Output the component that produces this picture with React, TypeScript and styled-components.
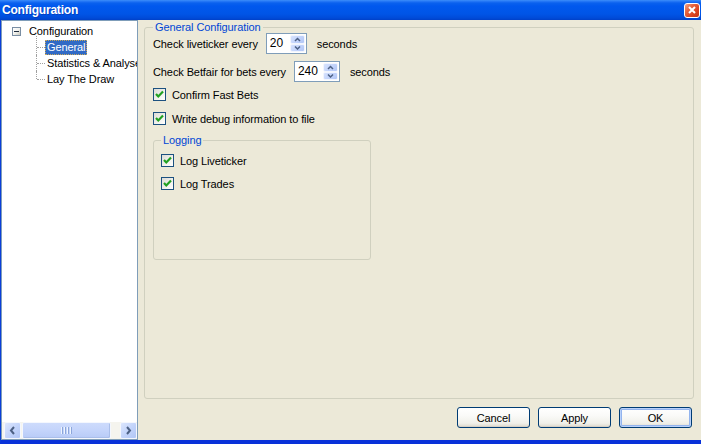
import React from 'react';
import styled, { createGlobalStyle } from 'styled-components';

const Global = createGlobalStyle`
  html, body { margin: 0; padding: 0; background: #ECE9D8; }
  body { font-family: "Liberation Sans", Arial, sans-serif; font-size: 11px; color: #000; letter-spacing: -0.1px; }
  * { box-sizing: border-box; }
`;

const Window = styled.div`
  width: 701px;
  height: 444px;
  display: flex;
  flex-direction: column;
  overflow: hidden;
  background: #ECE9D8;
`;

const TitleBar = styled.div`
  height: 20px;
  flex: none;
  display: flex;
  align-items: center;
  justify-content: space-between;
  padding: 0 1px 0 2px;
  background: linear-gradient(to bottom, #3D8FF9 0px, #2A7CF7 1px, #0A61EE 3px, #0058EE 6px, #0055E6 14px, #004BD8 18px, #0040C8 20px);
`;

const TitleText = styled.span`
  color: #fff;
  font-weight: bold;
  font-size: 12px;
  font-family: "Liberation Sans", Arial, sans-serif;
  letter-spacing: -0.2px;
  text-shadow: 1px 1px 0 rgba(10, 24, 131, 0.35);
`;

const CloseButton = styled.div`
  width: 16px;
  height: 15px;
  border: 1px solid #fff;
  border-radius: 3px;
  background: linear-gradient(135deg, #F2A287 0%, #E5643F 35%, #D9421E 70%, #C23414 100%);
  display: flex;
  align-items: center;
  justify-content: center;
`;

const Body = styled.div`
  flex: 1;
  min-height: 0;
  display: flex;
  border-left: 1px solid #0A3FD9;
  border-bottom: 4px solid #0831D9;
`;

const TreePanel = styled.div`
  width: 137px;
  flex: none;
  border: 1px solid #7F9DB9;
  background: #fff;
  display: flex;
  flex-direction: column;
`;

const TreeBody = styled.div`
  flex: 1;
  padding-top: 2px;
  overflow: hidden;
  white-space: nowrap;
`;

const RootRow = styled.div`
  height: 16px;
  display: flex;
  align-items: center;
  padding-left: 10px;
`;

const ExpandBox = styled.span`
  width: 9px;
  height: 9px;
  border: 1px solid #7A8EA3;
  background: linear-gradient(135deg, #ffffff 0%, #F2F2EE 50%, #C9C9BE 100%);
  display: flex;
  align-items: center;
  justify-content: center;
  flex: none;
  &::before {
    content: '';
    width: 5px;
    height: 1px;
    background: #1E2B3C;
  }
`;

const NodeLabel = styled.span<{ $selected?: boolean }>`
  display: inline-block;
  height: 15px;
  line-height: 15px;
  padding: 0 2px;
  background: ${p => (p.$selected ? '#316AC5' : 'transparent')};
  color: ${p => (p.$selected ? '#fff' : '#000')};
  outline: ${p => (p.$selected ? '1px dotted #C9A85A' : 'none')};
  outline-offset: -1px;
`;

const RootLabel = styled(NodeLabel)`
  margin-left: 6px;
`;

const ChildRow = styled.div<{ $first?: boolean; $last?: boolean }>`
  position: relative;
  height: 16px;
  display: flex;
  align-items: center;
  padding-left: 43px;
  &::before {
    content: '';
    position: absolute;
    left: 34px;
    top: ${p => (p.$first ? '-3px' : '0')};
    height: ${p => (p.$last ? '8px' : p.$first ? '19px' : '16px')};
    border-left: 1px dotted #A0A0A0;
  }
  &::after {
    content: '';
    position: absolute;
    left: 35px;
    top: 8px;
    width: 8px;
    border-top: 1px dotted #A0A0A0;
  }
`;

const HScroll = styled.div`
  height: 17px;
  flex: none;
  display: flex;
  padding-left: 2px;
  background: #F5F4EE;
`;

const ScrollBtn = styled.div`
  width: 17px;
  height: 17px;
  flex: none;
  border: 1px solid #F4F7FE;
  border-radius: 2px;
  background: linear-gradient(135deg, #DCE6FD 0%, #C3D4FB 50%, #B1C6F5 100%);
  display: flex;
  align-items: center;
  justify-content: center;
`;

const Thumb = styled.div`
  width: 89px;
  height: 17px;
  flex: none;
  margin-left: 1px;
  border: 1px solid #F4F7FE;
  border-radius: 2px;
  background: linear-gradient(to bottom, #CDDBFC 0%, #C4D4FB 50%, #B8CBF7 100%);
  box-shadow: inset -1px -1px 0 #A9BEEA;
  display: flex;
  align-items: center;
  justify-content: center;
  gap: 1px;
`;

const Grip = styled.span`
  width: 1px;
  height: 7px;
  background: #EEF4FE;
  box-shadow: 1px 0 0 #8CA6DB;
  margin-right: 1px;
`;

const Track = styled.div`
  flex: 1;
`;

const RightPane = styled.div`
  flex: 1;
  min-width: 0;
  display: flex;
  flex-direction: column;
  padding: 0 7px 12px 6px;
`;

const Group = styled.fieldset<{ $grow?: boolean; $width?: number }>`
  margin: ${p => (p.$grow ? '1px 0 0 0' : '9px 0 0 0')};
  border: 1px solid #D0D0BF;
  border-radius: 3px;
  min-width: 0;
  flex: ${p => (p.$grow ? '1' : 'none')};
  width: ${p => (p.$width ? `${p.$width}px` : 'auto')};
  padding: ${p => (p.$grow ? '0 8px 0 8px' : '8px 7px 69px 7px')};
  display: flex;
  flex-direction: column;
  align-items: flex-start;
`;

const Legend = styled.legend`
  color: #0046D5;
  padding: 0 2px;
  line-height: 12px;
  font-size: 11px;
`;

const SpinRow = styled.div<{ $gap: number }>`
  height: 21px;
  display: flex;
  align-items: center;
  margin-top: ${p => p.$gap}px;
  white-space: nowrap;
`;

const Spinner = styled.div<{ $w: number }>`
  width: ${p => p.$w}px;
  height: 21px;
  margin: 0 10px 0 8px;
  border: 1px solid #7F9DB9;
  background: #fff;
  display: flex;
  padding: 1px;
`;

const SpinValue = styled.span`
  flex: 1;
  padding-left: 2px;
  font-size: 12px;
  line-height: 17px;
  letter-spacing: 0;
`;

const SpinButtons = styled.div`
  width: 15px;
  display: flex;
  flex-direction: column;
`;

const SpinHalf = styled.div`
  flex: 1;
  border: 1px solid #F1F5FE;
  border-radius: 2px;
  background: linear-gradient(135deg, #D6E2FD 0%, #C2D3FB 55%, #B0C5F5 100%);
  display: flex;
  align-items: center;
  justify-content: center;
`;

const CheckRow = styled.label<{ $gap: number }>`
  height: 13px;
  display: flex;
  align-items: center;
  gap: 6px;
  margin-top: ${p => p.$gap}px;
  white-space: nowrap;
`;

const CheckBox = styled.span`
  width: 13px;
  height: 13px;
  flex: none;
  border: 1px solid #1C5180;
  background: linear-gradient(135deg, #DCDCD7 0%, #F0F0EC 55%, #FFFFFF 100%);
  display: flex;
  align-items: center;
  justify-content: center;
`;

const ButtonRow = styled.div`
  display: flex;
  justify-content: flex-end;
  gap: 8px;
  margin-top: 8px;
  padding-right: 2px;
`;

const Button = styled.button<{ $default?: boolean }>`
  width: 73px;
  height: 21px;
  border: 1px solid #003C74;
  border-radius: 3px;
  background: linear-gradient(to bottom, #FFFFFF 0%, #FAFAF8 40%, #F0F0EA 80%, #DCD7CB 100%);
  font-family: "Liberation Sans", Arial, sans-serif;
  font-size: 11px;
  letter-spacing: -0.1px;
  color: #000;
  padding: 0;
  box-shadow: ${p =>
    p.$default
      ? 'inset 0 0 0 1px #B9D1FA, inset 0 0 0 2px #93B4EE'
      : 'inset 0 -1px 0 #D6D0C5'};
`;

const Chevron = ({ dir }: { dir: 'up' | 'down' | 'left' | 'right' }) => {
  if (dir === 'left' || dir === 'right') {
    const d = dir === 'left' ? 'M5 1 L2 4.5 L5 8' : 'M2 1 L5 4.5 L2 8';
    return (
      <svg width="7" height="9" viewBox="0 0 7 9">
        <path d={d} fill="none" stroke="#4D6185" strokeWidth="2" />
      </svg>
    );
  }
  const d = dir === 'up' ? 'M1 4 L3.5 1.5 L6 4' : 'M1 1.5 L3.5 4 L6 1.5';
  return (
    <svg width="7" height="5" viewBox="0 0 7 5">
      <path d={d} fill="none" stroke="#4D6185" strokeWidth="1.5" />
    </svg>
  );
};

const Check = () => (
  <svg width="9" height="9" viewBox="0 0 9 9">
    <path d="M1 4 L3.3 6.5 L8 1.6" fill="none" stroke="#21A121" strokeWidth="2.2" />
  </svg>
);

const SpinField = ({ value, width }: { value: string; width: number }) => (
  <Spinner $w={width}>
    <SpinValue>{value}</SpinValue>
    <SpinButtons>
      <SpinHalf>
        <Chevron dir="up" />
      </SpinHalf>
      <SpinHalf>
        <Chevron dir="down" />
      </SpinHalf>
    </SpinButtons>
  </Spinner>
);

const CheckItem = ({ label, gap }: { label: string; gap: number }) => (
  <CheckRow $gap={gap}>
    <CheckBox>
      <Check />
    </CheckBox>
    <span>{label}</span>
  </CheckRow>
);

export default function App() {
  return (
    <>
      <Global />
      <Window>
        <TitleBar>
          <TitleText>Configuration</TitleText>
          <CloseButton>
            <svg width="8" height="8" viewBox="0 0 8 8">
              <path d="M1 1 L7 7 M7 1 L1 7" stroke="#fff" strokeWidth="2" />
            </svg>
          </CloseButton>
        </TitleBar>
        <Body>
          <TreePanel>
            <TreeBody>
              <RootRow>
                <ExpandBox />
                <RootLabel>Configuration</RootLabel>
              </RootRow>
              <ChildRow $first>
                <NodeLabel $selected>General</NodeLabel>
              </ChildRow>
              <ChildRow>
                <NodeLabel>Statistics &amp; Analyse</NodeLabel>
              </ChildRow>
              <ChildRow $last>
                <NodeLabel>Lay The Draw</NodeLabel>
              </ChildRow>
            </TreeBody>
            <HScroll>
              <ScrollBtn>
                <Chevron dir="left" />
              </ScrollBtn>
              <Thumb>
                <Grip />
                <Grip />
                <Grip />
                <Grip />
              </Thumb>
              <Track />
              <ScrollBtn>
                <Chevron dir="right" />
              </ScrollBtn>
            </HScroll>
          </TreePanel>
          <RightPane>
            <Group $grow>
              <Legend>General Configuration</Legend>
              <SpinRow $gap={0}>
                <span>Check liveticker every</span>
                <SpinField value="20" width={41} />
                <span>seconds</span>
              </SpinRow>
              <SpinRow $gap={7}>
                <span>Check Betfair for bets every</span>
                <SpinField value="240" width={46} />
                <span>seconds</span>
              </SpinRow>
              <CheckItem label="Confirm Fast Bets" gap={6} />
              <CheckItem label="Write debug information to file" gap={11} />
              <Group $width={218}>
                <Legend>Logging</Legend>
                <CheckItem label="Log Liveticker" gap={0} />
                <CheckItem label="Log Trades" gap={10} />
              </Group>
            </Group>
            <ButtonRow>
              <Button>Cancel</Button>
              <Button>Apply</Button>
              <Button $default>OK</Button>
            </ButtonRow>
          </RightPane>
        </Body>
      </Window>
    </>
  );
}
